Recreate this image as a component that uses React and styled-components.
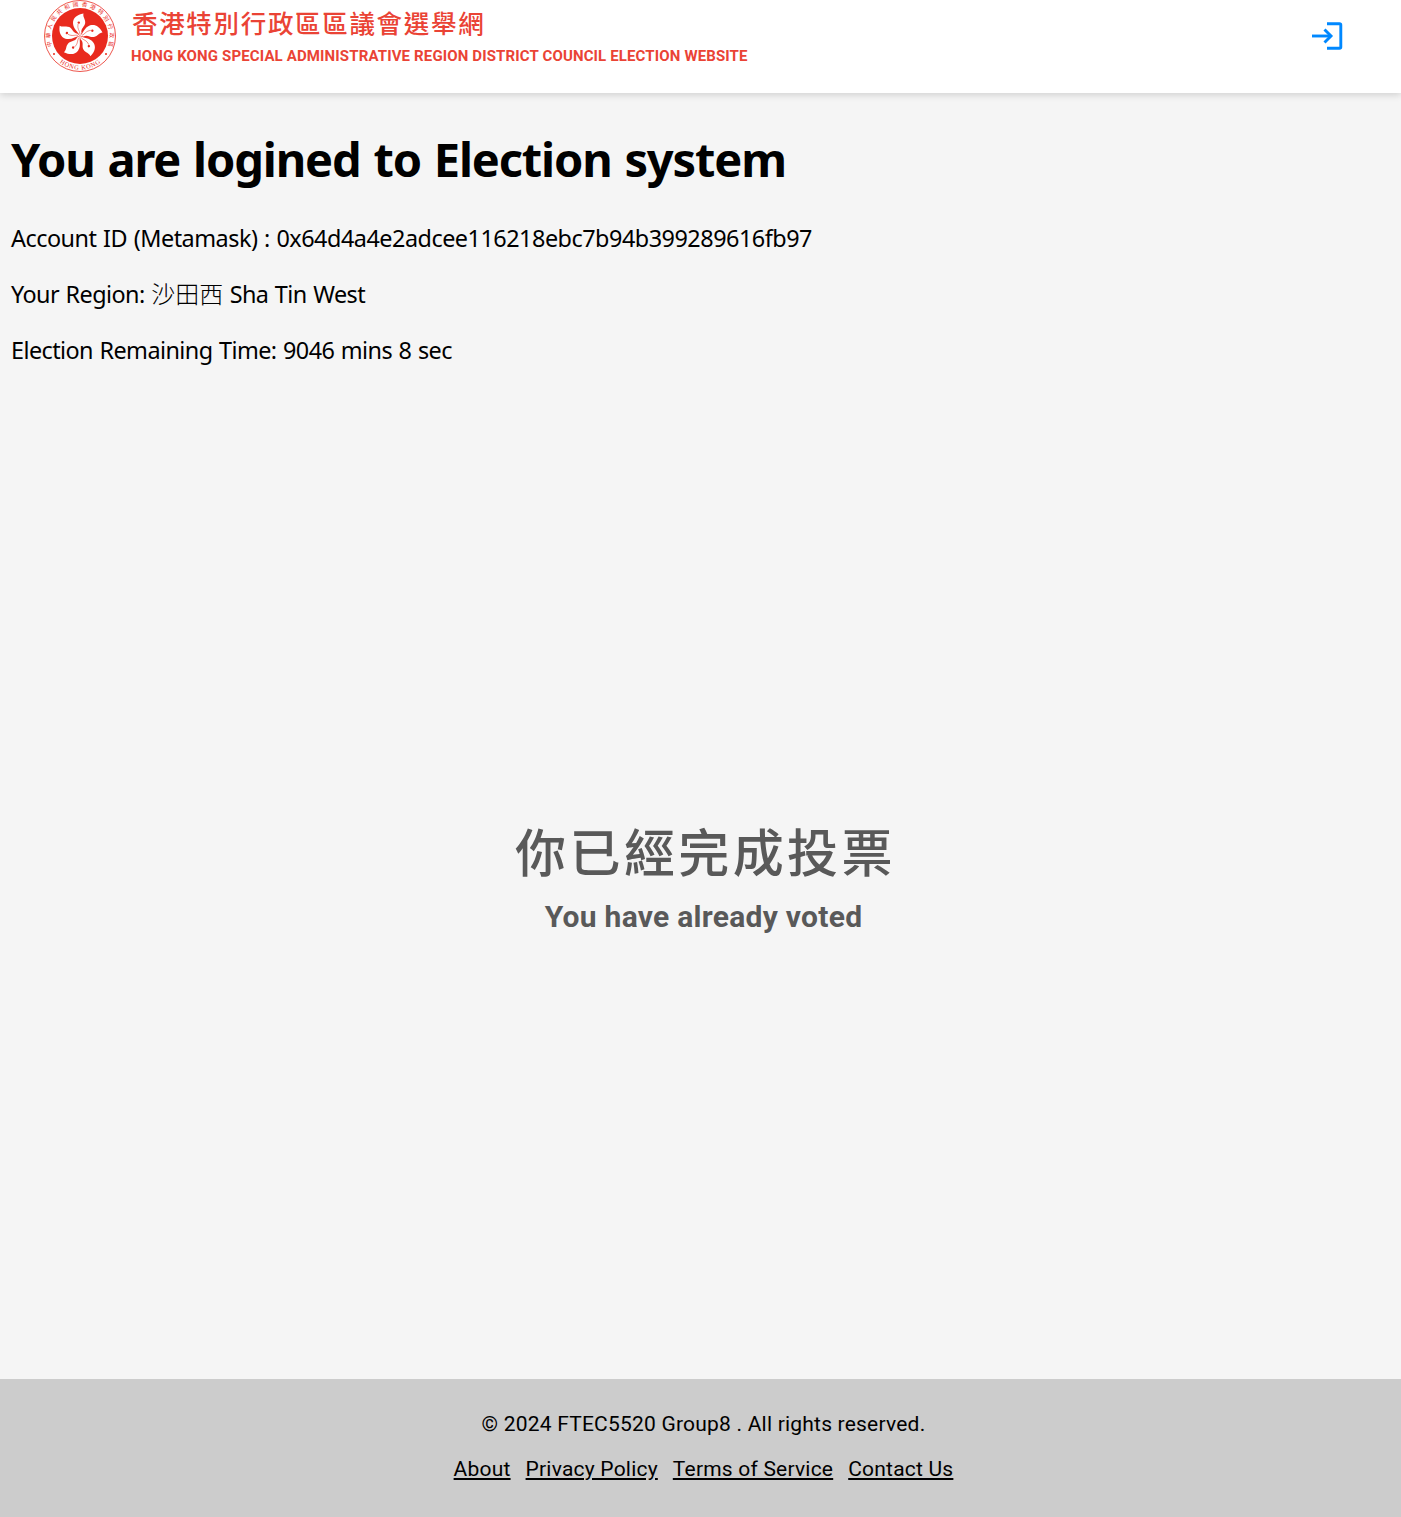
import React from "react";
import styled, { createGlobalStyle } from "styled-components";

const GlobalStyle = createGlobalStyle`
  *, *::before, *::after { box-sizing: border-box; }
  body { margin: 0; background: #f5f5f5; color: #000; }
`;

const Page = styled.div`
  display: flex;
  flex-direction: column;
  min-height: 100vh;
  font-family: "Noto Sans", "Noto Sans CJK TC", sans-serif;
`;

const Header = styled.header`
  display: flex;
  justify-content: space-between;
  height: 93px;
  padding: 0 57px 0 44px;
  background: #fff;
  box-shadow: 0 2px 7px rgba(0, 0, 0, 0.15);
`;

const Brand = styled.div`
  display: flex;
  gap: 15px;
`;

const BrandText = styled.div`
  display: flex;
  flex-direction: column;
  color: #ea4335;
`;

const BrandZh = styled.span`
  padding: 5px 0 0 1px;
  font: 500 25.5px/34px "Noto Sans CJK TC", sans-serif;
  letter-spacing: 1.68px;
`;

const BrandEn = styled.span`
  padding-top: 7px;
  font: 700 15px/20px Roboto, sans-serif;
  letter-spacing: 0.137px;
`;

const LoginButton = styled.button`
  display: flex;
  align-self: flex-start;
  margin-top: 20px;
  padding: 0;
  border: 0;
  background: none;
`;

const Main = styled.main`
  display: flex;
  flex: 1;
  flex-direction: column;
  padding: 31px 11px 0;
`;

const Title = styled.h1`
  margin: 0 0 29px;
  font-size: 47px;
  line-height: 70px;
  letter-spacing: -1.15px;
  word-spacing: 1.8px;
  white-space: nowrap;
`;

const InfoLine = styled.p`
  height: 32px;
  margin: 0 0 24px;
  font-size: 23.4px;
  line-height: 31px;
  letter-spacing: ${(p) => p.$spacing};
  word-spacing: 1px;
  white-space: nowrap;
`;

const RegionName = styled.span`
  font: 300 24px/1 "Noto Sans CJK TC", sans-serif;
  letter-spacing: 0;
`;

const Notice = styled.section`
  display: flex;
  flex-direction: column;
  align-items: center;
  margin-top: 423px;
  padding-left: 6px;
  color: #595959;
`;

const NoticeZh = styled.div`
  padding-left: 4px;
  font: 500 51px/72px "Noto Sans CJK TC", sans-serif;
  letter-spacing: 3.4px;
`;

const NoticeEn = styled.div`
  margin-top: 11px;
  font: 700 30px/40px Roboto, sans-serif;
  letter-spacing: 0.27px;
`;

const Footer = styled.footer`
  display: flex;
  flex-direction: column;
  align-items: center;
  gap: 15px;
  height: 138px;
  padding: 30px 0 0 6px;
  background: #ccc;
  font: 400 21px/30px Roboto, sans-serif;
  letter-spacing: 0.21px;
`;

const FooterLinks = styled.nav`
  display: flex;
  gap: 15px;
`;

const FooterLink = styled.a`
  color: #000;
  text-decoration: underline;
`;

const petal =
  "M0 0 C-1.5 -4 -7 -7 -7 -13 C-7 -18 -3 -21.5 3.5 -22.5 C2.5 -19 5.6 -17 5.2 -13 C4.8 -9 0.5 -8 1.5 -3 Z";

function Emblem() {
  return (
    <svg width="72" height="72" viewBox="-36 -36 72 72" aria-label="Hong Kong emblem">
      <defs>
        <path id="ring-top" d="M-21 21 A29.7 29.7 0 1 1 21 21" />
        <path id="ring-bottom" d="M-33.6 0 A33.6 33.6 0 0 0 33.6 0" />
      </defs>
      <circle r="35.5" fill="#fff" stroke="#e92a1e" strokeWidth="0.8" />
      <circle r="28" fill="#e92a1e" />
      {[0, 72, 144, 216, 288].map((angle) => (
        <g key={angle} transform={`rotate(${angle})`}>
          <path d={petal} fill="#fff" />
          <path d="M0 -2 C-0.5 -6 -3 -7 -2 -12" fill="none" stroke="#e92a1e" strokeWidth="0.5" />
          <circle cx="-1.2" cy="-13.4" r="1.2" fill="#e92a1e" />
        </g>
      ))}
      <text fill="#e92a1e" fontFamily="Noto Sans CJK TC, sans-serif" fontSize="5.6">
        <textPath href="#ring-top" startOffset="50%" textAnchor="middle" textLength="114">
          中華人民共和國香港特別行政區
        </textPath>
      </text>
      <text fill="#e92a1e" fontFamily="Liberation Serif, serif" fontSize="6.4">
        <textPath href="#ring-bottom" startOffset="50%" textAnchor="middle" textLength="44">
          HONG KONG
        </textPath>
      </text>
      <circle cx="-26" cy="18" r="1" fill="#e92a1e" />
      <circle cx="26" cy="18" r="1" fill="#e92a1e" />
    </svg>
  );
}

function LoginIcon() {
  return (
    <svg width="33" height="32" viewBox="0 0 33 32" fill="none" stroke="#0088ff" strokeWidth="2.9">
      <path d="M16 3.8 H28.5 Q29.8 3.8 29.8 5.1 V26.9 Q29.8 28.2 28.5 28.2 H16" />
      <path d="M1 16 H20" />
      <path d="M13.5 9.5 L20 16 L13.5 22.5" />
    </svg>
  );
}

const links = ["About", "Privacy Policy", "Terms of Service", "Contact Us"];

export default function App() {
  return (
    <Page>
      <GlobalStyle />
      <Header>
        <Brand>
          <Emblem />
          <BrandText>
            <BrandZh>香港特別行政區區議會選舉網</BrandZh>
            <BrandEn>HONG KONG SPECIAL ADMINISTRATIVE REGION DISTRICT COUNCIL ELECTION WEBSITE</BrandEn>
          </BrandText>
        </Brand>
        <LoginButton aria-label="Log in">
          <LoginIcon />
        </LoginButton>
      </Header>
      <Main>
        <Title>You are logined to Election system</Title>
        <InfoLine $spacing="-0.49px">
          Account ID (Metamask) : 0x64d4a4e2adcee116218ebc7b94b399289616fb97
        </InfoLine>
        <InfoLine $spacing="-0.57px">
          Your Region: <RegionName>沙田西</RegionName> Sha Tin West
        </InfoLine>
        <InfoLine $spacing="-0.57px">Election Remaining Time: 9046 mins 8 sec</InfoLine>
        <Notice>
          <NoticeZh>你已經完成投票</NoticeZh>
          <NoticeEn>You have already voted</NoticeEn>
        </Notice>
      </Main>
      <Footer>
        <span>© 2024 FTEC5520 Group8 . All rights reserved.</span>
        <FooterLinks>
          {links.map((label) => (
            <FooterLink key={label} href="#">
              {label}
            </FooterLink>
          ))}
        </FooterLinks>
      </Footer>
    </Page>
  );
}
